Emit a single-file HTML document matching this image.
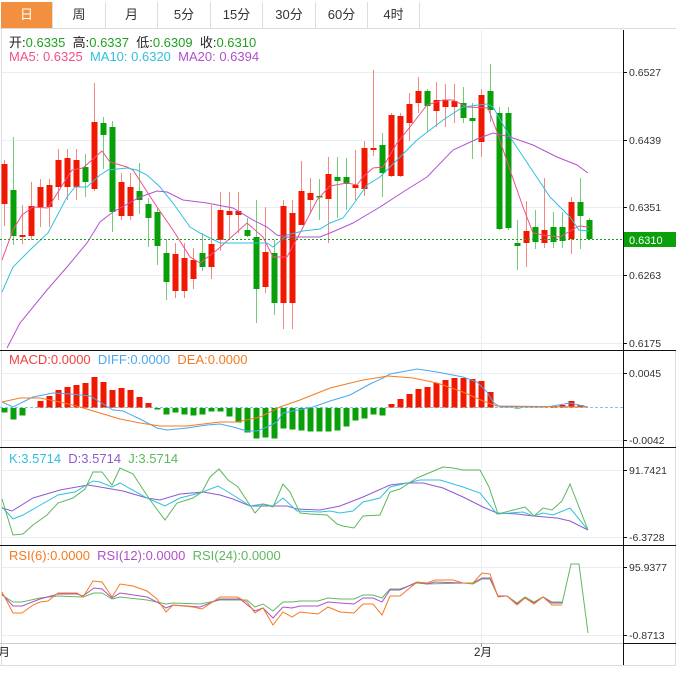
<!DOCTYPE html>
<html><head><meta charset="utf-8"><style>
html,body{margin:0;padding:0;background:#fff;width:678px;height:674px;overflow:hidden;font-family:"Liberation Sans","Noto Sans CJK SC",sans-serif}
.tabs{position:absolute;left:0;top:0;height:28px;width:676px;border-bottom:1px solid #ddd}
.tab{position:absolute;top:2px;height:26px;line-height:26px;text-align:center;font-size:13px;color:#333;border-right:1px solid #ddd;box-sizing:border-box}
.tab.on{background:#f39040;color:#fff}
.t{position:absolute;font-size:13px;line-height:15px;white-space:nowrap}
svg{position:absolute;left:0;top:0}
</style></head><body>
<div class="tabs">
<div class="tab on" style="left:1px;width:52px">日</div>
<div class="tab" style="left:53px;width:53px">周</div>
<div class="tab" style="left:106px;width:52px">月</div>
<div class="tab" style="left:158px;width:53px">5分</div>
<div class="tab" style="left:211px;width:52px">15分</div>
<div class="tab" style="left:263px;width:53px">30分</div>
<div class="tab" style="left:316px;width:52px">60分</div>
<div class="tab" style="left:368px;width:52px">4时</div>
</div>
<div class="t" style="left:9px;top:35px;color:#222">开:<span style="color:#22a022">0.6335</span>&nbsp; 高:<span style="color:#22a022">0.6337</span>&nbsp; 低:<span style="color:#22a022">0.6309</span>&nbsp; 收:<span style="color:#22a022">0.6310</span></div>
<div class="t" style="left:9px;top:49px"><span style="color:#f0508a">MA5: 0.6325</span>&nbsp; <span style="color:#30c0e0">MA10: 0.6320</span>&nbsp; <span style="color:#b050d0">MA20: 0.6394</span></div>
<div class="t" style="left:9px;top:352px"><span style="color:#f04040">MACD:0.0000</span>&nbsp; <span style="color:#4aa8f0">DIFF:0.0000</span>&nbsp; <span style="color:#f57a20">DEA:0.0000</span></div>
<div class="t" style="left:9px;top:451px"><span style="color:#30c0e0">K:3.5714</span>&nbsp; <span style="color:#8e5ad0">D:3.5714</span>&nbsp; <span style="color:#5cb85c">J:3.5714</span></div>
<div class="t" style="left:9px;top:548px"><span style="color:#f57a20">RSI(6):0.0000</span>&nbsp; <span style="color:#b050c8">RSI(12):0.0000</span>&nbsp; <span style="color:#60b860">RSI(24):0.0000</span></div>
<svg id="s" width="678" height="674" xmlns="http://www.w3.org/2000/svg" font-family="Liberation Sans, sans-serif" font-size="10.5"></svg>
<script>
var s=document.getElementById('s'),h='';
function L(x1,y1,x2,y2,c,w,extra){h+='<line x1="'+x1+'" y1="'+y1+'" x2="'+x2+'" y2="'+y2+'" stroke="'+c+'" stroke-width="'+(w||1)+'" '+(extra||'')+'/>';}
function P(pts,c){h+='<polyline fill="none" stroke="'+c+'" stroke-width="1" points="'+pts+'"/>';}
function T(x,y,t){h+='<text x="'+x+'" y="'+y+'" fill="#333">'+t+'</text>';}
[72,140,207,275,343,373,440,470,537,567,635].forEach(function(y){L(1,y+.5,623,y+.5,'#e8eef2');});
L(481.5,28,481.5,643,'#e8eef2');
L(1.5,28,1.5,665,'#ddd');
L(0,665.5,676,665.5,'#ddd');L(675.5,350,675.5,665,'#ddd');
L(0,643.5,623,643.5,'#ccc');
[350,447,545].forEach(function(y){L(0,y+.5,676,y+.5,'#111');});
L(623,643.5,676,643.5,'#111');
L(623.5,30,623.5,665,'#111');
[[72,'0.6527'],[140,'0.6439'],[207,'0.6351'],[275,'0.6263'],[343,'0.6175'],[373,'0.0045'],[440,'-0.0042'],[470,'91.7421'],[537,'-6.3728'],[567,'95.9377'],[635,'-0.8713']].forEach(function(a){L(623,a[0]+.5,627,a[0]+.5,'#111');T(629,a[0]+4,a[1]);});
var C=[['r',164,204,160,226],['g',190,236,137,245],['r',235,237,205,244],['r',206,236,182,240],['r',187,207,179,227],['r',185,207,179,227],['r',160,187,149,200],['r',158,187,149,200],['r',160,187,149,200],['g',167,182,154,197],['r',122,189,83,191],['g',123,135,117,169],['g',127,212,121,232],['r',182,216,173,220],['r',187,216,173,220],['g',191,200,163,214],['g',204,218,198,247],['g',212,246,208,265],['g',253,282,239,300],['r',254,291,243,298],['r',258,291,243,298],['r',260,279,248,289],['g',253,267,233,271],['r',244,267,205,279],['r',210,240,192,251],['r',211,215,192,240],['r',211,215,192,233],['g',230,236,218,237],['g',237,289,200,323],['r',252,287,207,293],['g',253,303,240,315],['r',206,303,200,329],['r',213,303,200,329],['r',191,225,161,225],['r',193,200,178,214],['g',196,197,179,220],['r',174,199,157,243],['g',177,181,157,218],['g',177,184,158,210],['r',185,188,150,200],['r',148,189,141,196],['r',148,150,70,156],['g',145,173,133,197],['r',115,176,113,177],['r',116,176,113,177],['r',104,123,93,141],['r',91,103,77,113],['g',91,106,89,132],['r',100,111,82,127],['r',100,107,84,127],['r',101,107,84,123],['g',103,118,87,123],['g',118,121,103,159],['r',95,142,89,157],['g',91,110,64,122],['g',113,229,107,230],['g',113,228,107,230],['g',243,246,220,270],['r',231,243,201,267],['g',227,242,210,249],['r',230,243,178,248],['g',227,242,212,248],['g',227,241,212,248],['r',202,239,197,254],['g',202,216,178,249],['g',220,239,218,240]];
C.forEach(function(c,i){var x=4.5+9*i,red=c[0]=='r';
L(x,c[3],x,c[4],red?'#f08a80':'#78cc78');
h+='<rect x="'+(x-3)+'" y="'+c[1]+'" width="6" height="'+Math.max(1.5,c[2]-c[1])+'" fill="'+(red?'#f01800':'#08a008')+'"/>';});
P('2,260 13,230 22,215 33,207 48,208 58,192 72,170 83,168 102,151 110,162 127,167 133,170 157,207 173,230 190,257 200,263 217,250 247,223 263,237 273,257 287,257 300,233 317,200 330,186 347,183 357,185 363,177 373,168 383,167 397,143 410,127 427,105 443,100 453,100 467,107 488,108 497,132 510,170 523,207 533,233 543,235 560,237 570,231 579,226 589,227','#f0508a');
P('2,292 13,267 30,250 48,233 67,197 75,187 87,187 100,175 108,170 127,168 137,170 147,175 160,187 173,203 190,227 200,233 220,243 253,243 267,243 273,247 287,235 303,231 320,229 330,223 343,218 355,202 367,185 380,177 397,160 417,140 443,120 463,107 487,104 493,107 510,137 530,167 550,197 570,217 579,230 589,231','#30c0e0');
P('7,348 20,323 47,290 67,267 87,243 100,222 113,212 140,197 157,191 167,192 183,200 207,203 233,208 253,220 267,227 277,235 287,237 320,237 330,233 353,223 380,207 403,192 427,177 453,150 477,139 493,133 510,137 533,145 557,157 577,165 588,173','#b453d0');
L(0,239.5,623,239.5,'#20a020',1,'stroke-dasharray="2,2"');
h+='<rect x="624" y="232" width="52" height="15" fill="#0aa00a"/><text x="629" y="244" fill="#fff" font-size="11">0.6310</text>';
L(0,407.5,623,407.5,'#7cc8e8',1,'stroke-dasharray="3,2"');
var M=[412,419,415,407,401,396,390,387,385,383,377,382,390,388,390,397,403,409,414,412,414,415,414,411,411,416,422,432,438,437,438,428,429,430,431,431,431,430,426,420,418,414,415,404,399,394,389,387,383,380,378,378,379,381,392,407,407,408,407,407,406,406,405,401,405,407];
M.forEach(function(y,i){if(y==407)return;var x=4.5+9*i,up=y<407;h+='<rect x="'+(x-3)+'" y="'+(up?y:408)+'" width="6" height="'+Math.abs(y-407.5)+'" fill="'+(up?'#f01800':'#08a008')+'"/>';});
P('2,402 13,407 33,397 53,393 70,394 90,396 100,402 113,410 123,411 140,419 157,428 167,430 187,428 207,425 220,424 233,427 247,431 257,431 267,427 277,422 283,413 293,411 313,407 330,401 350,395 370,384 383,378 390,374 417,369 437,372 463,377 477,382 487,392 493,402 500,407 517,407 547,407 570,403 588,407','#4aa8f0');
P('2,402 20,398 40,398 60,402 80,407 100,413 120,419 140,423 160,426 187,426 220,422 237,422 260,417 280,407 300,400 330,388 363,380 388,376 413,378 437,383 463,392 483,401 497,406 588,407','#f57a20');
P('2,508 12,511 33,498 60,490 88,485 100,487 123,491 147,498 160,500 180,494 203,492 220,495 233,499 250,506 260,506 287,506 297,509 320,510 330,508 340,506 363,497 390,485 407,483 423,483 443,488 463,497 483,507 497,513 517,514 533,516 557,518 570,521 588,530','#8e5ad0');
P('2,507 13,519 23,515 37,507 58,495 75,492 93,481 100,482 112,487 120,483 147,498 165,506 180,498 200,493 218,486 233,495 250,506 263,504 273,506 283,498 297,511 320,512 330,511 340,513 353,511 363,502 380,498 390,487 420,480 440,480 463,487 480,493 497,514 523,512 533,516 543,513 553,515 570,508 588,530','#30c0e0');
P('2,499 13,535 23,534 33,525 47,515 58,503 73,498 85,489 93,472 102,472 112,485 120,468 133,474 150,500 165,520 177,503 193,498 202,492 210,477 219,469 228,480 238,487 255,513 263,504 273,507 283,484 290,492 300,513 310,514 327,515 337,524 343,526 354,528 363,516 380,515 390,492 400,489 417,478 443,467 453,468 463,470 480,470 489,487 498,514 525,507 534,516 543,508 552,510 562,501 570,484 588,530','#5cb85c');
P('2,595 13,602 22,602 40,598 58,596 83,597 94,593 102,593 112,599 120,597 147,600 166,604 173,603 200,604 220,600 247,600 255,607 263,604 273,611 283,602 292,602 300,601 318,601 328,598 340,599 354,599 363,595 373,595 382,598 390,589 400,589 417,583 427,584 463,583 473,584 482,579 490,579 498,596 507,596 517,603 525,597 534,602 543,597 552,602 562,602','#60b860');
P('2,594 13,606 22,606 40,599 58,594 77,594 83,596 94,588 102,589 112,598 120,593 147,597 157,602 166,608 173,605 200,607 220,599 240,599 255,611 263,608 273,618 283,607 292,608 300,606 318,606 328,602 340,603 354,604 363,598 373,598 382,602 390,590 400,590 417,582 427,584 435,582 463,583 473,583 482,578 490,578 498,596 507,596 517,604 525,598 534,603 543,597 552,603 562,603','#b050c8');
P('2,592 13,613 22,613 33,605 40,602 48,601 58,593 77,593 83,597 93,581 102,582 112,597 120,584 133,586 147,591 157,599 166,612 173,605 193,607 202,609 220,597 237,597 247,602 255,613 263,608 273,625 283,612 292,617 300,612 318,614 328,607 340,612 354,613 363,604 373,604 382,615 390,596 400,596 417,582 427,583 435,580 453,580 463,583 473,583 482,573 490,574 498,597 507,596 517,605 525,598 534,604 543,597 552,605 562,605','#f57a20');
P('562,604 571,564 579,564 588,633','#60b860');
L(481.5,643,481.5,647,'#999');
h+='<text x="474" y="656" fill="#222" font-size="11.5">2月</text><text x="-8" y="656" fill="#222" font-size="11.5">1月</text>';
s.innerHTML=h;
</script>
</body></html>
